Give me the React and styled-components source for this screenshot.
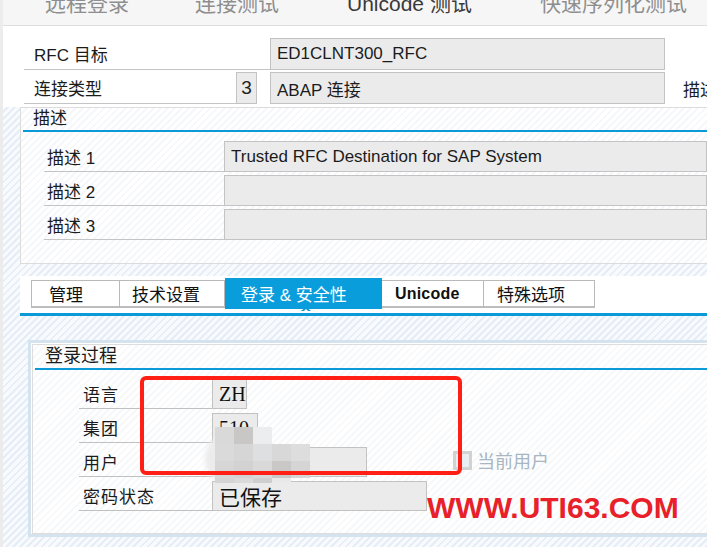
import React from "react"
import styled, { createGlobalStyle } from "styled-components"

const GlobalStyle = createGlobalStyle`
    html, body {
        margin: 0;
        padding: 0;
        background: #fff;
    }
`

const hatch = (a, b) =>
    `repeating-linear-gradient(135deg, ${a} 0px, ${a} 3px, ${b} 3px, ${b} 5px)`

const BLUE = "#0a9ad8"

const Page = styled.div`
    position: relative;
    width: 707px;
    height: 547px;
    overflow: hidden;
    box-sizing: border-box;
    border-left: 3px solid #ececec;
    background: ${hatch("#f8fafd", "#e5edf6")};
    font-family: "Liberation Sans", "Noto Sans CJK SC", sans-serif;
    font-size: 17px;
    color: #1b1b1b;
    white-space: nowrap;
`

/*
    TOOLBAR
*/

const Toolbar = styled.div`
    display: flex;
    align-items: flex-end;
    height: 25px;
    padding-left: 42px;
    background: #f6f6f6;
    border-bottom: 1px solid #dedede;
    overflow: hidden;
`
const ToolItem = styled.span`
    font-size: 21px;
    line-height: 22px;
    margin-bottom: 10px;
    margin-right: ${(p) => p.$gap || 0}px;
    color: ${(p) => (p.$on ? "#3a3a3a" : "#8e8e8e")};
`

/*
    HEADER FORM
*/

const TopForm = styled.div`
    display: flex;
    flex-direction: column;
    gap: 2px;
    padding: 12px 0 3px 21px;
    background: #fff;
`
const FormRow = styled.div`
    display: flex;
    height: 32px;
`
const FieldLabel = styled.div`
    width: ${(p) => p.$w}px;
    box-sizing: border-box;
    padding-left: ${(p) => p.$pl || 10}px;
    border-bottom: 1px solid #c4c4c4;
    display: flex;
    align-items: center;
    flex-shrink: 0;
`
const Field = styled.div`
    width: ${(p) => (p.$w ? `${p.$w}px` : "auto")};
    flex: ${(p) => (p.$w ? "none" : 1)};
    height: ${(p) => p.$h || 31}px;
    margin-left: ${(p) => p.$ml || 0}px;
    box-sizing: border-box;
    padding-left: 6px;
    background: #ebebeb;
    border: 1px solid #c3c3c3;
    display: flex;
    align-items: center;
    flex-shrink: 0;
`
const TypeBox = styled.div`
    width: 21px;
    height: 32px;
    flex-shrink: 0;
    box-sizing: border-box;
    border: 1px solid #c3c3c3;
    background: #ebebeb;
    display: flex;
    align-items: center;
    justify-content: center;
    font-size: 19px;
    color: #222;
`
const TailLabel = styled.span`
    margin-left: 18px;
    display: flex;
    align-items: center;
    flex-shrink: 0;
`

/*
    DESCRIPTION GROUP
*/

const Group = styled.section`
    margin-left: 17px;
    border: 1px solid #dcdcdc;
    border-right: none;
    background: ${hatch("#ffffff", "#f5f7fa")};
    padding-bottom: 23px;
`
const GroupTitle = styled.div`
    margin-left: 2px;
    height: 22px;
    line-height: 22px;
    padding-left: 10px;
    border-bottom: 2px solid ${BLUE};
`
const GroupRows = styled.div`
    display: flex;
    flex-direction: column;
    gap: 3px;
    padding: 9px 0 0 23px;
`
const DescRow = styled.div`
    display: flex;
    height: 31px;
`

/*
    TABS
*/

const TabStrip = styled.div`
    display: flex;
    align-items: flex-end;
    height: 32px;
    margin: 12px 0 0 17px;
    padding: 0 0 5px 11px;
    background: #fff;
    border-bottom: 3px solid ${BLUE};
`
const Tab = styled.div`
    position: relative;
    width: ${(p) => p.$w}px;
    height: ${(p) => (p.$active ? 31 : 28)}px;
    margin-bottom: ${(p) => (p.$active ? -1 : 0)}px;
    flex-shrink: 0;
    box-sizing: border-box;
    padding-left: ${(p) => p.$pl}px;
    display: flex;
    align-items: center;
    font-size: 17px;
    background: ${(p) => (p.$active ? "#0a9ddc" : "#fff")};
    color: ${(p) => (p.$active ? "#fff" : "#111")};
    border: 1px solid ${(p) => (p.$active ? "#0a9ddc" : "#b9b9b9")};
    border-left: none;
    border-bottom: 2px solid ${(p) => (p.$active ? "#0a9ddc" : "#bdbdbd")};

    &:first-child {
        border-left: 1px solid #b9b9b9;
    }

    ${(p) =>
        p.$active &&
        `
        &::before {
            content: "";
            position: absolute;
            left: 76px;
            bottom: -4px;
            border-left: 5px solid transparent;
            border-right: 5px solid transparent;
            border-bottom: 4px solid ${BLUE};
        }
        &::after {
            content: "";
            position: absolute;
            left: 78px;
            bottom: -5px;
            border-left: 3px solid transparent;
            border-right: 3px solid transparent;
            border-bottom: 3px solid #fff;
        }
    `}
`
const TabBold = styled.span`
    font-weight: 700;
    font-size: 16px;
    letter-spacing: 0.2px;
`

/*
    LOGIN PANEL
*/

const Panel = styled.section`
    margin: 24px 0 0 25px;
    border: 3px solid #d5e3ef;
    border-right: none;
    padding: 1px 0 0 1px;
    background: #fff;
`
const PanelInner = styled.div`
    border: 1px solid #dddddd;
    border-right: none;
    background: ${hatch("#ffffff", "#f6f8fa")};
    padding-bottom: 22px;
`
const PanelTitle = styled.div`
    margin-left: 2px;
    height: 23px;
    line-height: 23px;
    padding-left: 10px;
    font-size: 18px;
    border-bottom: 2px solid ${BLUE};
`
const PanelRows = styled.div`
    display: flex;
    flex-direction: column;
    padding: 5px 0 0 46px;
`
const LoginRow = styled.div`
    display: flex;
    align-items: flex-end;
    height: 34px;
`
const LoginLabel = styled.div`
    width: 133px;
    height: 34px;
    flex-shrink: 0;
    box-sizing: border-box;
    padding: 4px 0 0 4px;
    border-bottom: 1px solid #c0c0c0;
    display: flex;
    align-items: center;
    letter-spacing: 1px;
    font-size: 17px;
`
const LoginField = styled.div`
    width: ${(p) => p.$w}px;
    height: 30px;
    flex-shrink: 0;
    box-sizing: border-box;
    padding-left: 6px;
    background: #ebebeb;
    border: 1px solid #c2c2c2;
    display: flex;
    align-items: center;
    font-family: ${(p) =>
        p.$serif ? `"Liberation Serif", "Noto Sans CJK SC", serif` : "inherit"};
    font-size: ${(p) => p.$fs || 20}px;
    color: #111;
`
const CheckWrap = styled.label`
    display: flex;
    align-items: center;
    gap: 5px;
    margin: 0 0 4px 86px;
    color: #a8b5c2;
    font-size: 18px;
`
const CheckBox = styled.span`
    width: 19px;
    height: 19px;
    box-sizing: border-box;
    border: 3px solid #d2d2d2;
    background: #e9eef3;
`

/*
    OVERLAYS (annotation, mosaic, watermark)
*/

const Mosaic = styled.div`
    position: absolute;
    left: 212px;
    top: 427px;
    display: grid;
    grid-template-columns: repeat(5, 19px);
    grid-template-rows: 17px 17px 17px 5px;
`
const MosaicCell = styled.div`
    background: ${(p) => p.$c || "transparent"};
`
const Smudge = styled.div`
    position: absolute;
    left: 202px;
    top: 437px;
    width: 30px;
    height: 44px;
    border-radius: 50%;
    background: #ececec;
    filter: blur(2px);
`
const RedBox = styled.div`
    position: absolute;
    left: 137px;
    top: 376px;
    width: 322px;
    height: 99px;
    box-sizing: border-box;
    border: 4px solid #ff1f14;
    border-radius: 6px;
`
const Watermark = styled.div`
    position: absolute;
    left: 424px;
    top: 493px;
    font-family: "Liberation Sans", sans-serif;
    font-weight: 700;
    font-size: 30px;
    line-height: 30px;
    color: #e8202a;
`

const mosaic = [
    ["#d9d9d9", "#c8c7c6", "#ecedef", null, null],
    ["#dadada", "#d6d6d6", "#dedfe0", "#d8d8d8", "#dddddd"],
    ["#d6d6d6", "#d2d2d2", "#d9d9d9", "#c9c8c7", "#d5d5d5"],
    ["#d4d4d4", "#dadada", "#cfcfcf", "#e9e9e9", null],
]

const tabs = [
    { label: "管理", w: 89, pl: 17 },
    { label: "技术设置", w: 105, pl: 12 },
    { label: "登录 & 安全性", w: 157, pl: 16, active: true },
    { label: <TabBold>Unicode</TabBold>, w: 102, pl: 13 },
    { label: "特殊选项", w: 111, pl: 13 },
]

function App() {
    return (
        <>
            <GlobalStyle />
            <Page>
                <Toolbar>
                    <ToolItem $gap={66}>远程登录</ToolItem>
                    <ToolItem $gap={68}>连接测试</ToolItem>
                    <ToolItem $gap={68} $on>
                        Unicode 测试
                    </ToolItem>
                    <ToolItem>快速序列化测试</ToolItem>
                </Toolbar>

                <TopForm>
                    <FormRow>
                        <FieldLabel $w={246}>RFC 目标</FieldLabel>
                        <Field $w={395} $h={32}>
                            ED1CLNT300_RFC
                        </Field>
                    </FormRow>
                    <FormRow>
                        <FieldLabel $w={212}>连接类型</FieldLabel>
                        <TypeBox>3</TypeBox>
                        <Field $w={395} $h={32} $ml={13}>
                            ABAP 连接
                        </Field>
                        <TailLabel>描述</TailLabel>
                    </FormRow>
                </TopForm>

                <Group>
                    <GroupTitle>描述</GroupTitle>
                    <GroupRows>
                        <DescRow>
                            <FieldLabel $w={180} $pl={3}>
                                描述 1
                            </FieldLabel>
                            <Field>Trusted RFC Destination for SAP System</Field>
                        </DescRow>
                        <DescRow>
                            <FieldLabel $w={180} $pl={3}>
                                描述 2
                            </FieldLabel>
                            <Field />
                        </DescRow>
                        <DescRow>
                            <FieldLabel $w={180} $pl={3}>
                                描述 3
                            </FieldLabel>
                            <Field />
                        </DescRow>
                    </GroupRows>
                </Group>

                <TabStrip>
                    {tabs.map((t, i) => (
                        <Tab key={i} $w={t.w} $pl={t.pl} $active={t.active}>
                            {t.label}
                        </Tab>
                    ))}
                </TabStrip>

                <Panel>
                    <PanelInner>
                        <PanelTitle>登录过程</PanelTitle>
                        <PanelRows>
                            <LoginRow>
                                <LoginLabel>语言</LoginLabel>
                                <LoginField $w={35} $serif>
                                    ZH
                                </LoginField>
                            </LoginRow>
                            <LoginRow>
                                <LoginLabel>集团</LoginLabel>
                                <LoginField $w={46} $serif>
                                    510
                                </LoginField>
                            </LoginRow>
                            <LoginRow>
                                <LoginLabel>用户</LoginLabel>
                                <LoginField $w={155} $serif />
                                <CheckWrap>
                                    <CheckBox />
                                    当前用户
                                </CheckWrap>
                            </LoginRow>
                            <LoginRow>
                                <LoginLabel>密码状态</LoginLabel>
                                <LoginField $w={215} $fs={21}>
                                    已保存
                                </LoginField>
                            </LoginRow>
                        </PanelRows>
                    </PanelInner>
                </Panel>

                <Smudge />
                <Mosaic>
                    {mosaic.flat().map((c, i) => (
                        <MosaicCell key={i} $c={c} />
                    ))}
                </Mosaic>
                <RedBox />
                <Watermark>WWW.UTI63.COM</Watermark>
            </Page>
        </>
    )
}

export default App
